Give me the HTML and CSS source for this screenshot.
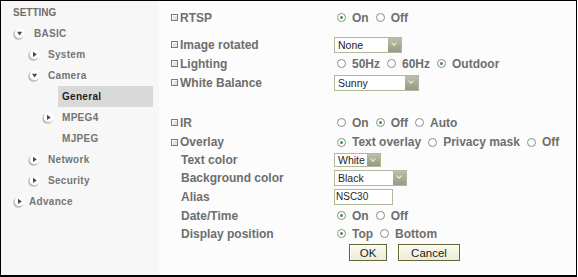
FILE: index.html
```html
<!DOCTYPE html>
<html lang="en">
<head>
    <meta charset="UTF-8">
    <title>Camera Setting</title>
    <link rel="stylesheet" href="styles.css">
</head>
<body>
<div class="frame">
    <nav class="side">
        <div class="side-title">SETTING</div>
        <div class="item lvl0"><svg class="tog" viewBox="0 0 12 12"><circle cx="5.5" cy="6.5" r="5.3" fill="#bdbdbd"/><circle cx="6.6" cy="5.4" r="4.9" fill="#fff"/><polygon points="4,3.8 9.2,3.8 6.6,7.6" fill="#4a4a4a"/></svg>BASIC</div>
        <div class="item lvl1"><svg class="tog" viewBox="0 0 12 12"><circle cx="5.5" cy="6.5" r="5.3" fill="#bdbdbd"/><circle cx="6.6" cy="5.4" r="4.9" fill="#fff"/><polygon points="5,2.8 5,8 8.8,5.4" fill="#4a4a4a"/></svg>System</div>
        <div class="item lvl1"><svg class="tog" viewBox="0 0 12 12"><circle cx="5.5" cy="6.5" r="5.3" fill="#bdbdbd"/><circle cx="6.6" cy="5.4" r="4.9" fill="#fff"/><polygon points="4,3.8 9.2,3.8 6.6,7.6" fill="#4a4a4a"/></svg>Camera</div>
        <div class="item active">General</div>
        <div class="item lvl2"><svg class="tog" viewBox="0 0 12 12"><circle cx="5.5" cy="6.5" r="5.3" fill="#bdbdbd"/><circle cx="6.6" cy="5.4" r="4.9" fill="#fff"/><polygon points="5,2.8 5,8 8.8,5.4" fill="#4a4a4a"/></svg>MPEG4</div>
        <div class="item lvl2 plain">MJPEG</div>
        <div class="item lvl1"><svg class="tog" viewBox="0 0 12 12"><circle cx="5.5" cy="6.5" r="5.3" fill="#bdbdbd"/><circle cx="6.6" cy="5.4" r="4.9" fill="#fff"/><polygon points="5,2.8 5,8 8.8,5.4" fill="#4a4a4a"/></svg>Network</div>
        <div class="item lvl1"><svg class="tog" viewBox="0 0 12 12"><circle cx="5.5" cy="6.5" r="5.3" fill="#bdbdbd"/><circle cx="6.6" cy="5.4" r="4.9" fill="#fff"/><polygon points="5,2.8 5,8 8.8,5.4" fill="#4a4a4a"/></svg>Security</div>
        <div class="item lvl0 adv"><svg class="tog" viewBox="0 0 12 12"><circle cx="5.5" cy="6.5" r="5.3" fill="#bdbdbd"/><circle cx="6.6" cy="5.4" r="4.9" fill="#fff"/><polygon points="5,2.8 5,8 8.8,5.4" fill="#4a4a4a"/></svg>Advance</div>
    </nav>

    <main class="content">
        <div class="row h19">
            <div class="label"><i class="box"></i>RTSP</div>
            <div class="opts">
                <span class="opt"><i class="radio on"></i>On</span>
                <span class="opt"><i class="radio"></i>Off</span>
            </div>
        </div>
        <div class="row h17 mt9">
            <div class="label"><i class="box"></i>Image rotated</div>
            <div class="sel w68"><span>None</span><i class="arrow"></i></div>
        </div>
        <div class="row h19 mt1">
            <div class="label"><i class="box"></i>Lighting</div>
            <div class="opts">
                <span class="opt"><i class="radio"></i>50Hz</span>
                <span class="opt"><i class="radio"></i>60Hz</span>
                <span class="opt"><i class="radio on"></i>Outdoor</span>
            </div>
        </div>
        <div class="row h17 mt1">
            <div class="label"><i class="box"></i>White Balance</div>
            <div class="sel w85"><span>Sunny</span><i class="arrow"></i></div>
        </div>

        <div class="row h19 mt22">
            <div class="label"><i class="box"></i>IR</div>
            <div class="opts">
                <span class="opt"><i class="radio"></i>On</span>
                <span class="opt"><i class="radio on"></i>Off</span>
                <span class="opt"><i class="radio"></i>Auto</span>
            </div>
        </div>
        <div class="row h18 mt1">
            <div class="label"><i class="box"></i>Overlay</div>
            <div class="opts">
                <span class="opt"><i class="radio on"></i>Text overlay</span>
                <span class="opt"><i class="radio"></i>Privacy mask</span>
                <span class="opt"><i class="radio"></i>Off</span>
            </div>
        </div>
        <div class="row h15 mt1">
            <div class="label sub">Text color</div>
            <div class="sel w47 short"><span>White</span><i class="arrow"></i></div>
        </div>
        <div class="row h17 mt2">
            <div class="label sub">Background color</div>
            <div class="sel w73"><span>Black</span><i class="arrow"></i></div>
        </div>
        <div class="row h17 mt2">
            <div class="label sub">Alias</div>
            <input class="field" type="text" value="NSC30">
        </div>
        <div class="row h19 mt1">
            <div class="label sub">Date/Time</div>
            <div class="opts">
                <span class="opt"><i class="radio on"></i>On</span>
                <span class="opt"><i class="radio"></i>Off</span>
            </div>
        </div>
        <div class="row h17">
            <div class="label sub">Display position</div>
            <div class="opts">
                <span class="opt"><i class="radio on"></i>Top</span>
                <span class="opt"><i class="radio"></i>Bottom</span>
            </div>
        </div>
        <div class="row h17 mt2">
            <div></div>
            <div class="actions">
                <button class="btn ok">OK</button>
                <button class="btn cancel">Cancel</button>
            </div>
        </div>
    </main>
</div>
</body>
</html>
```

FILE: styles.css
```css
body {
    margin: 0;
    background: #fff;
    font-family: "Liberation Sans", Arial, sans-serif;
}
.frame {
    width: 577px;
    height: 277px;
    box-sizing: border-box;
    border: 1px solid #000;
    border-bottom-width: 2px;
    display: flex;
    background: #fcfcfc;
}

/* left menu */
.side {
    width: 158px;
    background: #f7f7f7;
    font-size: 10px;
    font-weight: bold;
    color: #757575;
    letter-spacing: 0.3px;
}
.side-title {
    height: 22px;
    padding: 2px 0 0 12px;
    box-sizing: border-box;
    line-height: 19px;
    letter-spacing: 0;
    color: #6e6e6e;
}
.item {
    height: 21px;
    display: flex;
    align-items: center;
}
.tog {
    width: 12px;
    height: 12px;
    margin-right: 9px;
}
.lvl0 { padding-left: 12px; }
.lvl0.adv .tog { margin-right: 4px; }
.lvl1 { padding-left: 27px; }
.lvl1 .tog { margin-right: 8px; }
.lvl2 { padding-left: 41px; }
.lvl2 .tog { margin-right: 8px; }
.lvl2.plain { padding-left: 61px; }
.item.active {
    margin-left: 57px;
    width: 95px;
    padding-left: 4px;
    box-sizing: border-box;
    background: #d9d9d9;
    color: #1e1e1e;
}

/* form */
.content {
    flex: 1;
    padding: 7px 0 0 12px;
}
.row {
    display: grid;
    grid-template-columns: 163px auto;
    align-items: center;
}
.h15 { height: 15px; }
.h17 { height: 17px; }
.h18 { height: 18px; }
.h19 { height: 19px; }
.mt1 { margin-top: 1px; }
.mt2 { margin-top: 2px; }
.mt9 { margin-top: 9px; }
.mt22 { margin-top: 22px; }

.label {
    font-size: 12px;
    font-weight: bold;
    color: #6e6e6e;
    display: flex;
    align-items: center;
    white-space: nowrap;
}
.label.sub { padding-left: 10px; }
.box {
    width: 7px;
    height: 7px;
    box-sizing: border-box;
    border: 1px solid #7a7a7a;
    background: #e4e4e4;
    box-shadow: inset 1px 1px #fff;
    margin-right: 2px;
}

.opts {
    display: flex;
    align-items: center;
    padding-left: 3px;
    font-size: 12px;
    font-weight: bold;
    color: #6e6e6e;
}
.opt {
    display: flex;
    align-items: center;
    margin-right: 7px;
    white-space: nowrap;
}
.radio {
    width: 9px;
    height: 9px;
    box-sizing: border-box;
    border: 1px solid #8c8c8c;
    border-radius: 50%;
    background: #fff;
    margin-right: 6px;
    position: relative;
}
.radio.on::after {
    content: "";
    position: absolute;
    left: 2px;
    top: 2px;
    width: 3px;
    height: 3px;
    border-radius: 50%;
    background: #3c9a3c;
}

.sel {
    height: 16px;
    box-sizing: border-box;
    border: 1px solid #b3b79b;
    background: #fff;
    display: flex;
    justify-content: space-between;
    font-size: 10.5px;
    color: #1e1e1e;
}
.sel span {
    padding-left: 3px;
    line-height: 14px;
}
.sel.short { height: 14px; }
.sel.short span { line-height: 12px; }
.w47 { width: 47px; }
.w68 { width: 68px; }
.w73 { width: 73px; }
.w85 { width: 85px; }
.arrow {
    width: 13px;
    background: linear-gradient(#bcc0aa, #959a81);
    position: relative;
}
.arrow::after {
    content: "";
    position: absolute;
    left: 4px;
    top: 3px;
    width: 3px;
    height: 3px;
    border-right: 1.5px solid #eef0e4;
    border-bottom: 1.5px solid #eef0e4;
    transform: rotate(45deg);
}

.field {
    width: 59px;
    height: 16px;
    box-sizing: border-box;
    border: 1px solid #b3b79b;
    padding: 0 1px;
    font-family: "Liberation Sans", Arial, sans-serif;
    font-size: 10px;
    color: #1e1e1e;
    outline: none;
}

.actions {
    display: flex;
    padding-left: 15px;
    gap: 11px;
}
.btn {
    height: 17px;
    box-sizing: border-box;
    border: 1px solid #66653a;
    background: linear-gradient(#fbfbf0, #ecebd6);
    box-shadow: inset 1px 1px #fff;
    font-family: "Liberation Sans", Arial, sans-serif;
    font-size: 11.5px;
    color: #222;
    padding: 0;
    line-height: 14px;
}
.btn.ok { width: 38px; }
.btn.cancel { width: 62px; }
```
